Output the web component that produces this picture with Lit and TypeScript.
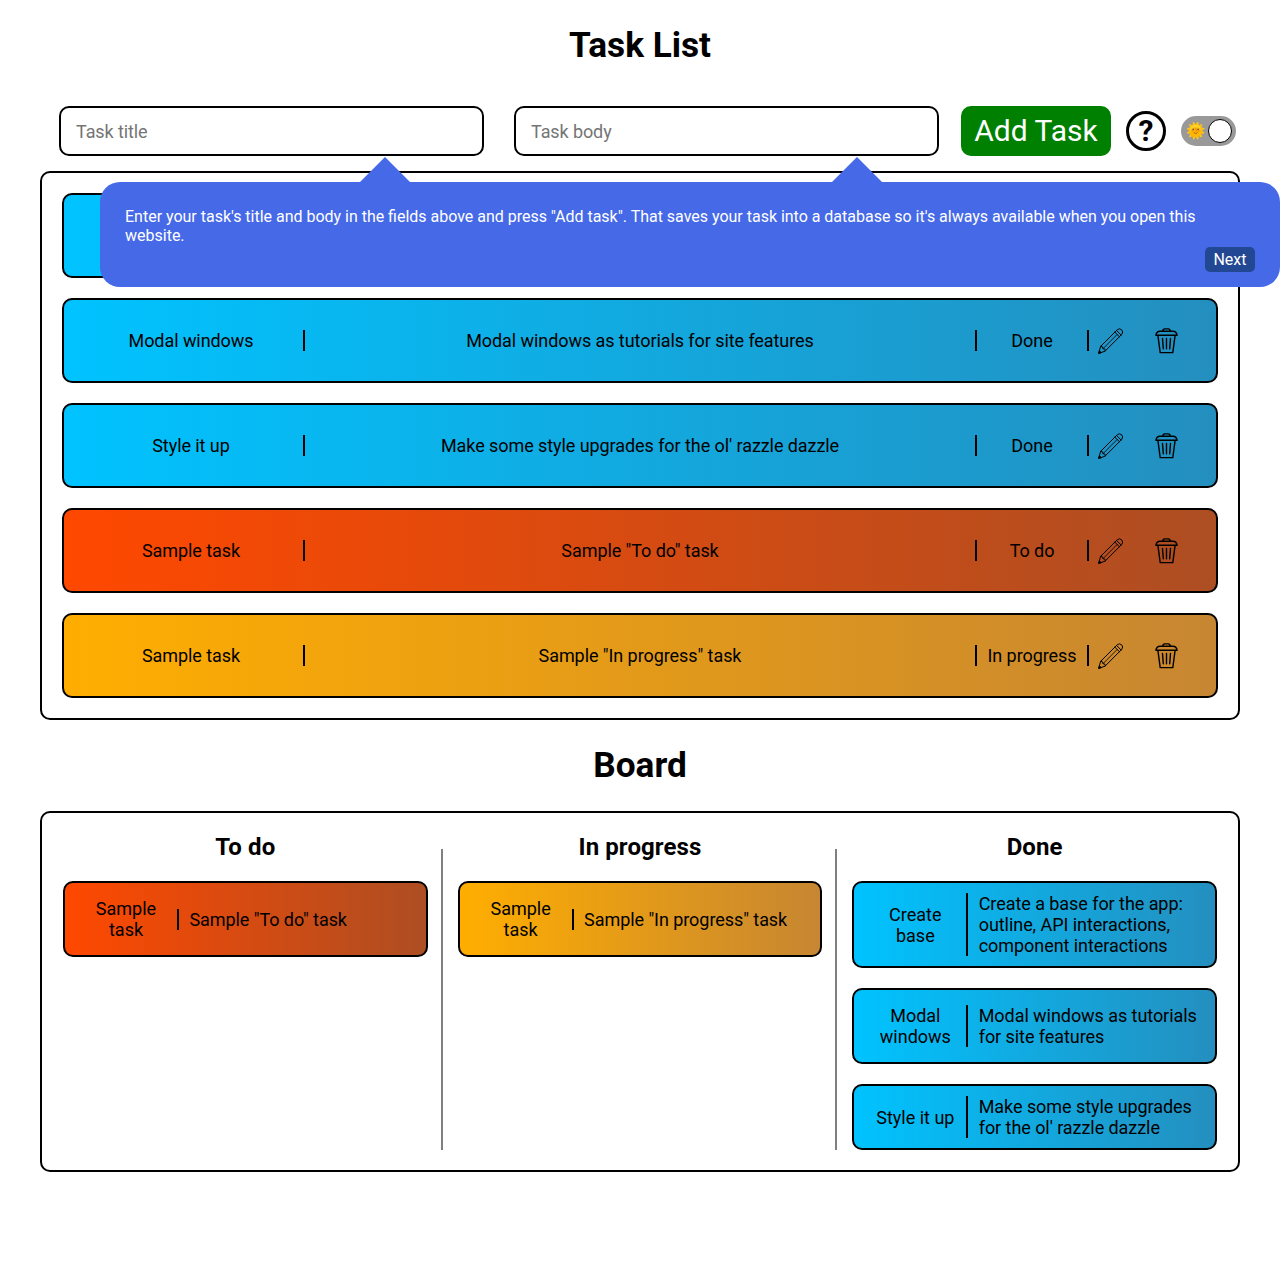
import { LitElement, html, css, svg } from "lit";
import { customElement, property } from "lit/decorators.js";

type Status = "To do" | "In progress" | "Done";
interface Task {
  title: string;
  body: string;
  status: Status;
}

const TASKS: Task[] = [
  {
    title: "Create base",
    body: "Create a base for the app: outline, API interactions, component interactions",
    status: "Done",
  },
  { title: "Modal windows", body: "Modal windows as tutorials for site features", status: "Done" },
  { title: "Style it up", body: "Make some style upgrades for the ol' razzle dazzle", status: "Done" },
  { title: "Sample task", body: 'Sample "To do" task', status: "To do" },
  { title: "Sample task", body: 'Sample "In progress" task', status: "In progress" },
];

const TONE: Record<Status, string> = { "To do": "todo", "In progress": "progress", Done: "done" };

const tones = css`
  .todo { background-image: linear-gradient(to right, #ff4800, #ad4e23); }
  .progress { background-image: linear-gradient(to right, #ffae00, #c78632); }
  .done { background-image: linear-gradient(to right, #00c3ff, #248fbf); }
`;

const pencil = svg`<svg class="icon" viewBox="0 0 26 26" fill="none" stroke="#000" stroke-width="1" stroke-linejoin="round" stroke-linecap="round">
  <path d="M.8 25 L2.6 18.4 L19.2 1.8 Q21.5 -.2 23.6 1.8 Q25.7 4 23.8 6.3 L7.3 22.9 Z"/>
  <path d="M2.6 18.4 L4.6 18.9 L5 20.7 L6.9 21.1 L7.3 22.9"/>
  <path d="M16.9 4.2 L21.4 8.7 M18.6 2.5 L23.1 7"/>
  <path d="M5 20.7 L19.1 6.5" stroke-width=".8"/>
  <path d="M.8 25 L1.4 22.8 L3 24.4 Z" fill="#000"/>
</svg>`;

const trash = svg`<svg class="icon" viewBox="0 0 26 26" fill="none" stroke="#000" stroke-width="1.4" stroke-linejoin="round" stroke-linecap="round">
  <path d="M8.8 3.2 Q8.8 .9 10.8 .9 H14.2 Q16.2 .9 16.2 3.2"/>
  <path d="M6 3.3 H19 Q22.6 3.4 23.1 7.3 H1.9 Q2.4 3.4 6 3.3 Z"/>
  <path d="M3.9 7.4 L6.2 24.6 H18.8 L21.1 7.4"/>
  <path d="M8.5 10.4 L9.3 20.8 M12.5 10.4 V20.8 M16.5 10.4 L15.7 20.8"/>
</svg>`;

@customElement("task-row")
export class TaskRow extends LitElement {
  @property({ attribute: false }) task!: Task;
  @property({ type: Boolean }) covered = false;

  static styles = [
    tones,
    css`
      :host { display: block; }
      .row {
        box-sizing: border-box;
        height: 85px;
        border: 2px solid #000;
        border-radius: 10px;
        padding: 0 21px 0 14px;
        display: grid;
        grid-template-columns: 227px 672px 112px 106px;
        align-items: center;
        text-align: center;
        font-size: 18px;
        line-height: 21px;
        letter-spacing: -0.07px;
      }
      .covered > * { visibility: hidden; }
      .cell { border-right: 2px solid #000; }
      .name { padding-left: 1px; }
      .actions { display: flex; gap: 30px; padding-left: 9px; }
      .icon { width: 26px; height: 26px; display: block; flex: none; }
    `,
  ];

  render() {
    const t = this.task;
    return html`<div class="row ${TONE[t.status]} ${this.covered ? "covered" : ""}">
      <div class="cell name">${t.title}</div>
      <div class="cell">${t.body}</div>
      <div class="cell">${t.status}</div>
      <div class="actions">${pencil}${trash}</div>
    </div>`;
  }
}

@customElement("board-card")
export class BoardCard extends LitElement {
  @property({ attribute: false }) task!: Task;

  static styles = [
    tones,
    css`
      :host { display: block; }
      .card {
        border: 2px solid #000;
        border-radius: 10px;
        display: flex;
        align-items: center;
        padding: 0 10px;
        font-size: 18px;
        line-height: 21px;
      }
      .title {
        box-sizing: border-box;
        width: 102px;
        padding: 15px 8px;
        text-align: center;
        flex: none;
      }
      .body {
        margin: 10px 0;
        padding-left: 10.4px;
        border-left: 2px solid #000;
        letter-spacing: -0.06px;
      }
    `,
  ];

  render() {
    const t = this.task;
    return html`<div class="card ${TONE[t.status]}">
      <div class="title">${t.title}</div>
      <div class="body">${t.body}</div>
    </div>`;
  }
}

@customElement("app-root")
export class AppRoot extends LitElement {
  static styles = css`
    :host {
      display: block;
      height: 1280px;
      background: #fff;
      color: #000;
      font-family: Roboto, "Liberation Sans", sans-serif;
      overflow: hidden;
      position: relative;
    }
    h1 { margin: 0; text-align: center; font-size: 35.2px; line-height: 42px; font-weight: 700; }
    .main-title { padding-top: 24px; }
    .form { display: flex; align-items: center; padding: 40px 44px 15px 59px; }
    .field {
      box-sizing: border-box;
      width: 425px;
      height: 50px;
      border: 2px solid #000;
      border-radius: 10px;
      padding: 0 15px;
      margin: 0 30px 0 0;
      font: 18px Roboto, sans-serif;
      letter-spacing: -0.1px;
      background: #fff;
    }
    .field::placeholder { color: #757575; }
    .field.last { margin-right: 22px; }
    .add {
      width: 150px;
      height: 50px;
      border: 0;
      border-radius: 10px;
      padding: 0 0 2px;
      background: #008000;
      color: #fff;
      font: 30px Roboto, sans-serif;
      white-space: nowrap;
    }
    .help {
      box-sizing: border-box;
      width: 40px;
      height: 40px;
      margin: 0 15px;
      border: 3px solid #000;
      border-radius: 50%;
      font-size: 30px;
      line-height: 34px;
      font-weight: 700;
      text-align: center;
    }
    .toggle {
      box-sizing: border-box;
      width: 55px;
      height: 30px;
      border-radius: 15px;
      padding: 0 4px 0 5px;
      background: #999;
      display: flex;
      align-items: center;
      justify-content: space-between;
    }
    .sun { font-size: 15.5px; line-height: 30px; width: 20px; }
    .knob { box-sizing: border-box; width: 24px; height: 24px; border: 1px solid #000; border-radius: 50%; background: #fff; }
    .panel { border: 2px solid #000; border-radius: 10px; margin: 0 40px; }
    .list { padding: 20px; display: flex; flex-direction: column; gap: 20px; }
    .board-title { padding: 24px 0 25px; }
    .board { padding: 36px 6px 20px; display: grid; grid-template-columns: repeat(3, 1fr); }
    .column {
      display: flex;
      flex-direction: column;
      gap: 20px;
      padding: 0 13px 0 15px;
      border-right: 2px solid #808080;
    }
    .column:last-child { border-right-color: transparent; }
    h2 {
      margin: -16px 0 0;
      text-align: center;
      font-size: 24px;
      line-height: 28px;
      font-weight: 700;
      letter-spacing: 0.1px;
    }
    .tip {
      position: absolute;
      left: 100px;
      top: 182px;
      box-sizing: border-box;
      width: 1180px;
      height: 105px;
      border-radius: 20px;
      padding: 25px 25px 15px;
      background: #4569e7;
      color: #fff;
      font-size: 16px;
      line-height: 19px;
      word-spacing: -0.07px;
      display: flex;
      flex-direction: column;
      justify-content: space-between;
    }
    .arrow {
      position: absolute;
      top: -25px;
      width: 50px;
      height: 25px;
      background: #4569e7;
      clip-path: polygon(50% 0, 100% 100%, 0 100%);
    }
    .first { left: 260px; }
    .second { left: 732px; }
    .next {
      align-self: flex-end;
      width: 50px;
      height: 25px;
      padding: 0;
      border: 0;
      border-radius: 5px;
      background: #224894;
      color: #fff;
      font: 16px Roboto, sans-serif;
    }
  `;

  render() {
    const statuses: Status[] = ["To do", "In progress", "Done"];
    return html`
      <h1 class="main-title">Task List</h1>
      <div class="form">
        <input class="field" placeholder="Task title" />
        <input class="field last" placeholder="Task body" />
        <button class="add">Add Task</button>
        <div class="help">?</div>
        <div class="toggle"><span class="sun">🌞</span><span class="knob"></span></div>
      </div>
      <div class="panel list">
        ${TASKS.map((t, i) => html`<task-row .task=${t} ?covered=${i === 0}></task-row>`)}
      </div>
      <h1 class="board-title">Board</h1>
      <div class="panel board">
        ${statuses.map(
          (s) => html`<div class="column">
            <h2>${s}</h2>
            ${TASKS.filter((t) => t.status === s).map((t) => html`<board-card .task=${t}></board-card>`)}
          </div>`
        )}
      </div>
      <div class="tip">
        <span class="arrow first"></span><span class="arrow second"></span>
        <div>
          Enter your task's title and body in the fields above and press "Add task". That saves your task into a
          database so it's always available when you open this website.
        </div>
        <button class="next">Next</button>
      </div>
    `;
  }
}
